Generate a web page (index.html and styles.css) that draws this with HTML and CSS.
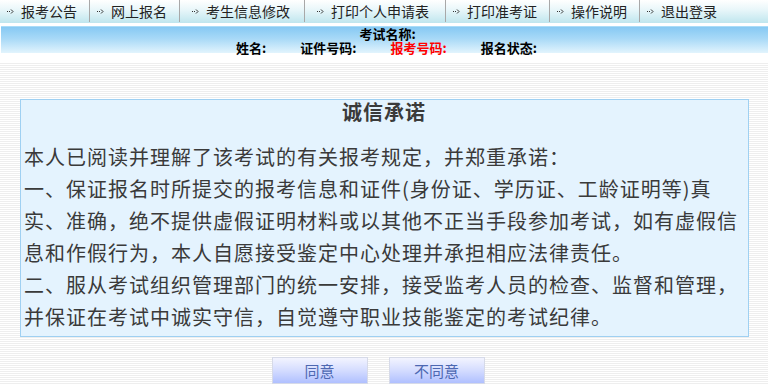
FILE: index.html
```html
<!DOCTYPE html>
<html lang="zh-CN">
<head>
    <meta charset="UTF-8">
    <meta name="viewport" content="width=device-width, initial-scale=1.0">
    <title>诚信承诺</title>
    <link rel="stylesheet" href="styles.css">
</head>
<body>
    <!-- Header -->
    <div class="header">
        <div class="topnav">
            <a class="nav-item w90">
                <svg class="nav-arrow" width="7" height="5" viewBox="0 0 7 5"><rect x="0" y="2" width="1" height="1" fill="#333"/><rect x="2" y="2" width="1" height="1" fill="#333"/><path d="M4 0.5 L6 2.5 L4 4.5" fill="none" stroke="#333" stroke-width="1"/></svg>报考公告
            </a>
            <a class="nav-item w90">
                <svg class="nav-arrow" width="7" height="5" viewBox="0 0 7 5"><rect x="0" y="2" width="1" height="1" fill="#333"/><rect x="2" y="2" width="1" height="1" fill="#333"/><path d="M4 0.5 L6 2.5 L4 4.5" fill="none" stroke="#333" stroke-width="1"/></svg>网上报名
            </a>
            <a class="nav-item w125 wide">
                <svg class="nav-arrow" width="7" height="5" viewBox="0 0 7 5"><rect x="0" y="2" width="1" height="1" fill="#333"/><rect x="2" y="2" width="1" height="1" fill="#333"/><path d="M4 0.5 L6 2.5 L4 4.5" fill="none" stroke="#333" stroke-width="1"/></svg>考生信息修改
            </a>
            <a class="nav-item w141 wide">
                <svg class="nav-arrow" width="7" height="5" viewBox="0 0 7 5"><rect x="0" y="2" width="1" height="1" fill="#333"/><rect x="2" y="2" width="1" height="1" fill="#333"/><path d="M4 0.5 L6 2.5 L4 4.5" fill="none" stroke="#333" stroke-width="1"/></svg>打印个人申请表
            </a>
            <a class="nav-item w104">
                <svg class="nav-arrow" width="7" height="5" viewBox="0 0 7 5"><rect x="0" y="2" width="1" height="1" fill="#333"/><rect x="2" y="2" width="1" height="1" fill="#333"/><path d="M4 0.5 L6 2.5 L4 4.5" fill="none" stroke="#333" stroke-width="1"/></svg>打印准考证
            </a>
            <a class="nav-item w90">
                <svg class="nav-arrow" width="7" height="5" viewBox="0 0 7 5"><rect x="0" y="2" width="1" height="1" fill="#333"/><rect x="2" y="2" width="1" height="1" fill="#333"/><path d="M4 0.5 L6 2.5 L4 4.5" fill="none" stroke="#333" stroke-width="1"/></svg>操作说明
            </a>
            <a class="nav-item last">
                <svg class="nav-arrow" width="7" height="5" viewBox="0 0 7 5"><rect x="0" y="2" width="1" height="1" fill="#333"/><rect x="2" y="2" width="1" height="1" fill="#333"/><path d="M4 0.5 L6 2.5 L4 4.5" fill="none" stroke="#333" stroke-width="1"/></svg>退出登录
            </a>
        </div>

        <div class="info-band">
            <div class="info-row">考试名称:</div>
            <div class="info-row info-fields">
                <span>姓名:</span>
                <span>证件号码:</span>
                <span class="red">报考号码:</span>
                <span>报名状态:</span>
            </div>
        </div>
    </div>

    <!-- Pledge -->
    <div class="pledge">
        <h2 class="pledge-title">诚信承诺</h2>
        <p>本人已阅读并理解了该考试的有关报考规定，并郑重承诺：</p>
        <p>一、保证报名时所提交的报考信息和证件(身份证、学历证、工龄证明等)真实、准确，绝不提供虚假证明材料或以其他不正当手段参加考试，如有虚假信息和作假行为，本人自愿接受鉴定中心处理并承担相应法律责任。</p>
        <p>二、服从考试组织管理部门的统一安排，接受监考人员的检查、监督和管理，并保证在考试中诚实守信，自觉遵守职业技能鉴定的考试纪律。</p>
    </div>

    <div class="actions">
        <div class="btn">同意</div>
        <div class="btn">不同意</div>
    </div>
</body>
</html>
```

FILE: styles.css
```css
body {
    margin: 0;
    font-family: "Noto Sans CJK SC", "Liberation Sans", sans-serif;
    color: #333;
    background: repeating-linear-gradient(to bottom, #ffffff 0, #ffffff 1px, #eeeeee 1px, #eeeeee 2px);
    height: 384px;
    overflow: hidden;
}

/* Header */
.header {
    background-color: #fff;
    padding-bottom: 9px;
}

.topnav {
    display: flex;
    height: 23px;
    background: linear-gradient(to bottom, #ffffff 0%, #eaf7fa 40%, #bfe6ee 100%);
}

.nav-item {
    display: flex;
    align-items: center;
    height: 22px;
    padding-left: 7px;
    font-size: 14px;
    color: #222;
    border-right: 1px solid #a8a8a8;
    box-sizing: border-box;
    cursor: pointer;
}

.nav-item.wide {
    padding-left: 12px;
}

.nav-item.last {
    flex: 1;
    border-right: none;
}

.w90 { width: 90px; }
.w104 { width: 104px; }
.w125 { width: 125px; }
.w141 { width: 141px; }

.nav-arrow {
    margin-right: 7px;
}

.info-band {
    height: 27px;
    margin: 3px 0 0 1px;
    box-sizing: border-box;
    border-top: 1px solid #a9dcf8;
    background: linear-gradient(to bottom, #86c9f3 0%, #a8d9f7 45%, #e2f4fd 100%);
    font-size: 13px;
    font-weight: bold;
    color: #000;
}

.info-row {
    height: 14px;
    line-height: 14px;
    text-align: center;
    padding-left: 6px;
}

.info-fields {
    display: flex;
    justify-content: center;
    gap: 34px;
    padding-left: 4px;
}

.red {
    color: #ff0000;
}

/* Pledge box */
.pledge {
    margin: 37px 19px 0 20px;
    padding: 0 4px 3px 3px;
    background-color: #e4f3fe;
    border: 1px solid #9fd0f2;
    font-size: 20px;
    letter-spacing: 1px;
    line-height: 32px;
    color: #3a3a3a;
}

.pledge-title {
    margin: 0 0 17px;
    font-size: 20px;
    line-height: 24px;
    text-align: center;
}

.pledge p {
    margin: 0;
}

/* Buttons */
.actions {
    display: flex;
    justify-content: center;
    gap: 21px;
    margin-top: 20px;
    padding-right: 12px;
}

.btn {
    width: 96px;
    height: 27px;
    line-height: 25px;
    box-sizing: border-box;
    border: 1px solid #d6dae8;
    background: linear-gradient(to bottom, #f3f4ff 0%, #d4dcff 50%, #b0c0ff 100%);
    text-align: center;
    font-size: 15px;
    color: #4d68b2;
    cursor: pointer;
}
```
